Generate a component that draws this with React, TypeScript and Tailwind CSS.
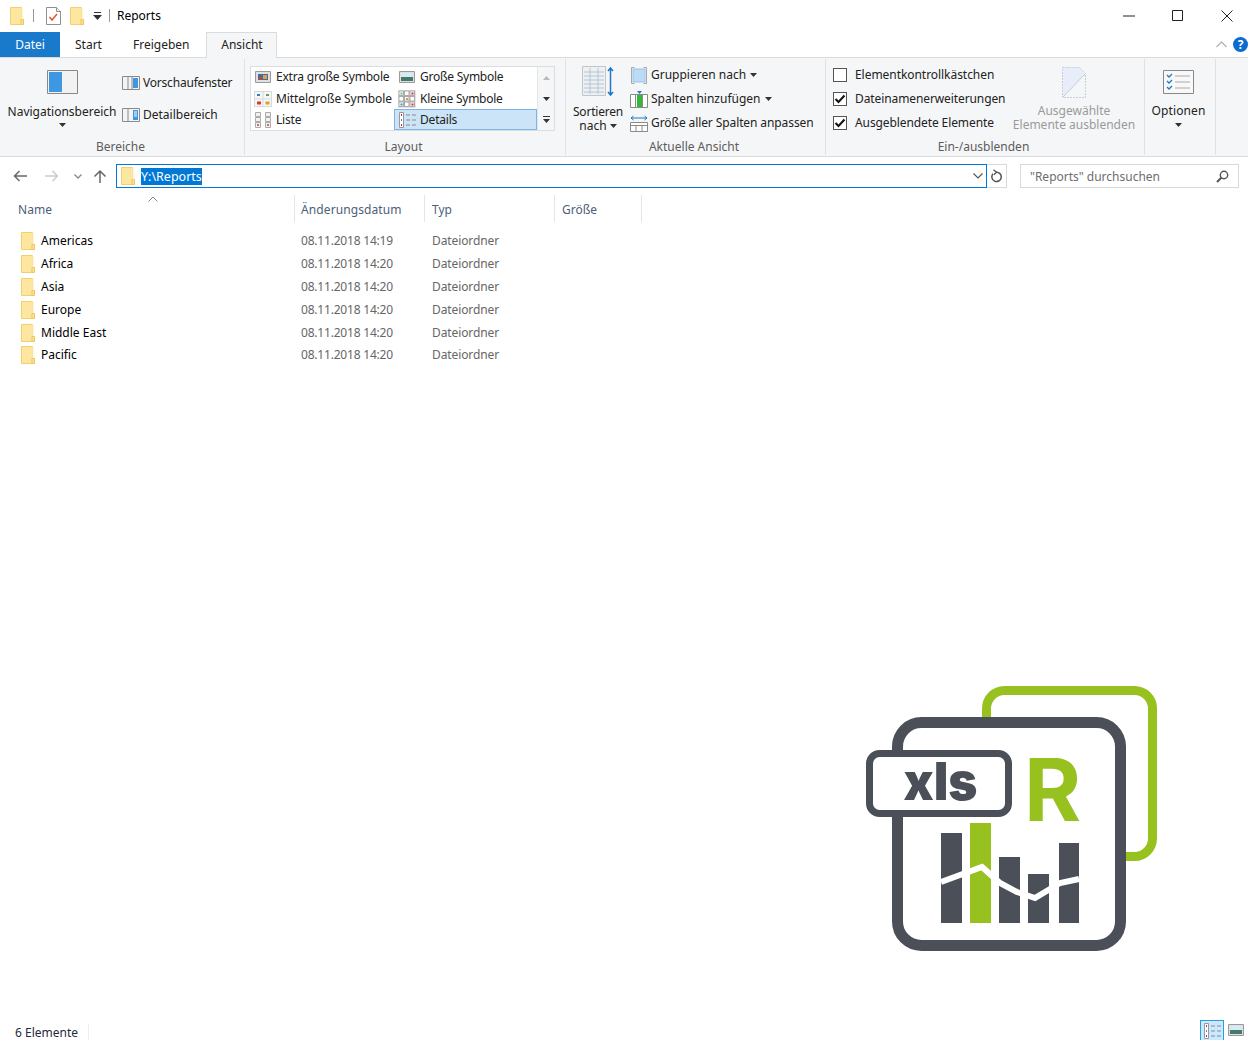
const font = "font-['Noto_Sans','Open_Sans',sans-serif]";

const folders = [
  { name: 'Americas', date: '08.11.2018 14:19' },
  { name: 'Africa', date: '08.11.2018 14:20' },
  { name: 'Asia', date: '08.11.2018 14:20' },
  { name: 'Europe', date: '08.11.2018 14:20' },
  { name: 'Middle East', date: '08.11.2018 14:20' },
  { name: 'Pacific', date: '08.11.2018 14:20' },
];

const Folder = ({ className = '' }: { className?: string }) => (
  <svg width="14" height="18" viewBox="0 0 14 18" className={`shrink-0 ${className}`}>
    <path d="M.5.500h11v17H.5z" fill="#fde69f" stroke="#f2d06e" />
    <path d="M11.500 1h2v11h-2z" fill="#fff6dc" />
    <path d="M11 12.500h2.500v5H11z" fill="#fde39a" stroke="#eec65a" />
  </svg>
);

const Caret = ({ className = '' }: { className?: string }) => (
  <svg width="7" height="4" viewBox="0 0 7 4" className={className}>
    <path d="M0 0h7L3.500 4z" fill="#333" />
  </svg>
);

const Frame = ({ children }: { children?: React.ReactNode }) => (
  <svg width="18" height="14" viewBox="0 0 18 14" className="shrink-0">
    <path d="M.5.500h17v13H.5z" fill="#f4f4f4" stroke="#8a8a8a" />
    {children}
  </svg>
);

const Grid = () => {
  const cells = [];
  for (let r = 0; r < 3; r++)
    for (let c = 0; c < 3; c++)
      cells.push(<rect key={`${r}-${c}`} x={1 + c * 5.500} y={1 + r * 5.500} width="4.500" height="4.500" fill="#fff" stroke="#9a9a9a" strokeWidth=".8" />);
  return (
    <svg width="18" height="18" viewBox="0 0 18 18" className="shrink-0">
      <rect width="18" height="18" fill="#e4e4e4" />
      {cells}
      <rect x="2.500" y="2.500" width="2" height="2" fill="#6b9" />
      <rect x="13.500" y="2.500" width="2" height="2" fill="#d23" />
      <rect x="8" y="8" width="2" height="2" fill="#dc9a2a" />
      <rect x="2.500" y="13.500" width="2" height="2" fill="#39c" />
      <rect x="13.500" y="13.500" width="2" height="2" fill="#d23" />
    </svg>
  );
};

const DetailsIcon = () => (
  <svg width="18" height="16" viewBox="0 0 18 16" className="shrink-0">
    <path d="M1.500.500h4v15h-4z" fill="#fff" stroke="#999" />
    <path d="M8 3h4M14 3h4M8 8h4M14 8h4M8 13h4M14 13h4" stroke="#8a8a8a" strokeWidth="1.200" />
    <rect x="3" y="2" width="1" height="2" fill="#d23" />
    <rect x="3" y="7" width="1" height="2" fill="#39c" />
    <rect x="3" y="12" width="1" height="2" fill="#d23" />
  </svg>
);

const GalleryIcon = ({ kind }: { kind: string }) => {
  if (kind === 'grid') return <Grid />;
  if (kind === 'details') return <DetailsIcon />;
  if (kind === 'list')
    return (
      <svg width="18" height="16" viewBox="0 0 18 16" className="shrink-0">
        <path d="M1.500.5h5v4h-5zM1.500 5.500h5v4h-5zM1.500 10.500h5v5h-5zM11.500.5h5v4h-5zM11.500 5.500h5v4h-5zM11.500 10.500h5v5h-5z" fill="#f2f2f2" stroke="#aaa" />
        <rect x="3" y="12" width="2" height="2" fill="#d66" />
        <rect x="13" y="12" width="2" height="2" fill="#d66" />
      </svg>
    );
  if (kind === 'medium')
    return (
      <svg width="18" height="16" viewBox="0 0 18 16" className="shrink-0">
        <rect width="18" height="16" fill="#d9d9d9" />
        <path d="M1 1h7.500v6.500H1zM9.500 1H17v6.500H9.500zM1 8.500h7.500V15H1zM9.500 8.500H17V15H9.500z" fill="#f7f7f7" />
        <rect x="3" y="3" width="3" height="2" fill="#2f7fc4" />
        <rect x="12" y="3" width="3" height="2" fill="#5fa05a" />
        <rect x="3" y="10.500" width="4" height="3" fill="#d63a25" />
        <rect x="11.500" y="10.500" width="4" height="3" fill="#d9a32c" />
      </svg>
    );
  return (
    <svg width="16" height="12" viewBox="0 0 16 12" className="shrink-0">
      <path d="M.5.500h15v11H.5z" fill="#e0e0e0" stroke="#9a9a9a" />
      {kind === 'extra' ? (
        <>
          <rect x="3" y="3" width="10" height="6" fill="#3f6ea6" />
          <rect x="8" y="4" width="4" height="4" fill="#e2a431" />
          <rect x="4" y="6" width="3" height="3" fill="#c9432d" />
        </>
      ) : (
        <>
          <rect x="2" y="2" width="12" height="4" fill="#d4ecf7" />
          <rect x="2" y="6" width="12" height="4" fill="#47796b" />
        </>
      )}
    </svg>
  );
};

const GalleryItem = ({ icon, label, tracking, selected, raised }: { icon: string; label: string; tracking: string; selected?: boolean; raised?: boolean }) => (
  <div className={`flex h-[21.500px] w-full items-center border pl-[2px] ${raised ? 'pb-[2px]' : ''} ${selected ? 'border-[#7eb4ea] bg-[#cce4f7]' : 'border-transparent'}`}>
    <span className="flex w-[20px] shrink-0 justify-center">
      <GalleryIcon kind={icon} />
    </span>
    <span className={`ml-[3px] whitespace-nowrap ${tracking}`}>{label}</span>
  </div>
);

const Group = ({ width, label, children }: { width: string; label?: string; children?: React.ReactNode }) => (
  <div className={`flex h-full shrink-0 flex-col border-r border-[#e0e1e2] ${width}`}>
    <div className="relative flex-1">{children}</div>
    <div className="h-[17px] pr-[3px] text-center leading-[17px] text-[#5c5c5c]">{label}</div>
  </div>
);

const Check = ({ checked }: { checked?: boolean }) => (
  <span className="flex h-[14px] w-[14px] shrink-0 items-center justify-center border border-[#555] bg-white">
    {checked && (
      <svg width="12" height="10" viewBox="0 0 12 10">
        <path d="M1.500 5l3 3 6-6.500" fill="none" stroke="#111" strokeWidth="2" />
      </svg>
    )}
  </span>
);

const Logo = () => (
  <svg width="320" height="290" viewBox="0 0 320 290" className="absolute left-[850px] top-[675px]">
    <path d="M136.500 45V33.500a18 18 0 0 1 18-18h130a18 18 0 0 1 18 18v130a18 18 0 0 1-18 18H274" fill="none" stroke="#97c11f" strokeWidth="9" />
    <rect x="47.500" y="47.500" width="223" height="223" rx="24" fill="#fff" stroke="#4b4f57" strokeWidth="11" />
    <rect x="19.500" y="78.500" width="139" height="60" rx="10" fill="#fff" stroke="#4b4f57" strokeWidth="7" />
    <text x="90.500" y="125" textAnchor="middle" fontFamily="Inter, sans-serif" fontWeight="900" fontSize="52" textLength="74" lengthAdjust="spacingAndGlyphs" fill="#4b4f57">xls</text>
    <text x="174" y="146" fontFamily="Inter, sans-serif" fontWeight="700" fontSize="87" fill="#97c11f">R</text>
    <rect x="91" y="158" width="21" height="90" fill="#4b4f57" />
    <rect x="120" y="148" width="21" height="100" fill="#97c11f" />
    <rect x="149" y="182" width="21" height="66" fill="#4b4f57" />
    <rect x="178" y="199" width="21" height="49" fill="#4b4f57" />
    <rect x="209" y="168" width="20" height="80" fill="#4b4f57" />
    <path d="M91 207l19-7 22-8 18 16 17 9 18 6 25-15 19-4" fill="none" stroke="#fff" strokeWidth="6" />
  </svg>
);

export default function App() {
  return (
    <div className={`relative flex h-[1040px] w-[1248px] flex-col overflow-hidden bg-white text-[12px] text-[#222] ${font}`}>
      {/* title bar */}
      <div className="flex h-[31px] shrink-0 items-center">
        <Folder className="ml-[10px]" />
        <span className="ml-[9px] h-[13px] w-px bg-[#999]" />
        <svg width="15" height="18" viewBox="0 0 15 18" className="ml-[12px]">
          <path d="M.5.500h10l4 4v13H.5z" fill="#fff" stroke="#8f8f8f" />
          <path d="M10.500.5v4h4" fill="#eee" stroke="#8f8f8f" />
          <path d="M3.500 10l2.500 3 5-6" fill="none" stroke="#e2562d" strokeWidth="1.500" />
        </svg>
        <Folder className="ml-[9px]" />
        <svg width="9" height="8" viewBox="0 0 9 8" className="ml-[9px]">
          <path d="M1 .5h7" stroke="#333" />
          <path d="M0 3h9L4.500 8z" fill="#333" />
        </svg>
        <span className="ml-[7px] h-[13px] w-px bg-[#999]" />
        <span className="ml-[7px] text-black">Reports</span>
        <div className="ml-auto flex items-center">
          <svg width="12" height="2" viewBox="0 0 12 2"><path d="M0 1h12" stroke="#222" /></svg>
          <svg width="12" height="12" viewBox="0 0 12 12" className="ml-[37px]"><path d="M.5.500h10v10H.5z" fill="none" stroke="#222" /></svg>
          <svg width="12" height="12" viewBox="0 0 12 12" className="ml-[37px] mr-[15px]"><path d="M.5.500l11 11M11.500.5l-11 11" stroke="#222" /></svg>
        </div>
      </div>

      {/* tabs */}
      <div className="relative z-10 -mb-px flex h-[27px] shrink-0 items-end">
        <div className="mb-px flex h-[25px] w-[60px] items-center justify-center bg-[#1979ca] text-white">Datei</div>
        <div className="mb-px ml-[15px] flex h-[25px] items-center">Start</div>
        <div className="mb-px ml-[31px] flex h-[25px] items-center">Freigeben</div>
        <div className="ml-[17px] flex h-[26px] w-[71px] items-center justify-center border border-b-0 border-[#dadbdc] bg-[#f5f6f7] pb-px">Ansicht</div>
        <div className="mb-px ml-auto flex h-[25px] items-center">
          <svg width="11" height="7" viewBox="0 0 11 7"><path d="M.5 6l5-5 5 5" fill="none" stroke="#b5b5b5" strokeWidth="1.300" /></svg>
          <span className="ml-[6px] flex h-[15px] w-[15px] items-center justify-center rounded-full bg-[#0a6cce] font-bold text-white">?</span>
        </div>
      </div>

      {/* ribbon */}
      <div className="flex h-[100px] shrink-0 border-y border-[#dadbdc] bg-[#f5f6f7] pb-px pt-px">
        <Group width="w-[245px]" label="Bereiche">
          <div className="flex h-full">
            <div className="ml-[8px] flex w-[108px] flex-col items-center pt-[11px]">
              <svg width="31" height="24" viewBox="0 0 31 24">
                <path d="M.5.500h30v23H.5z" fill="#f2f2f2" stroke="#888" />
                <rect x="2" y="2" width="13" height="20" fill="#3e97e0" />
              </svg>
              <span className="mt-[10px] whitespace-nowrap leading-[16px]">Navigationsbereich</span>
              <Caret className="mt-[3px]" />
            </div>
            <div className="ml-[6px] flex flex-col pt-[13px]">
              <div className="flex h-[22px] items-center gap-[3px]">
                <Frame>
                  <path d="M6 1v12M10 1v12" stroke="#8a8a8a" />
                  <rect x="11" y="2" width="5" height="10" fill="#3e97e0" />
                </Frame>
                <span className="tracking-[-.2px]">Vorschaufenster</span>
              </div>
              <div className="mt-[10px] flex h-[22px] items-center gap-[3px]">
                <Frame>
                  <path d="M6 1v12" stroke="#8a8a8a" />
                  <rect x="11" y="2" width="5" height="10" fill="#3e97e0" />
                  <path d="M12 4h3M12 6h3M12 8h3" stroke="#fff" />
                </Frame>
                <span>Detailbereich</span>
              </div>
            </div>
          </div>
        </Group>

        <Group width="w-[321px]" label="Layout">
          <div className="ml-[5px] mt-[7px] flex h-[65px] w-[305px] border border-[#dcdddf] bg-white">
            <div className="-ml-px flex w-[144px] flex-col">
              <GalleryItem icon="extra" label="Extra große Symbole" tracking="tracking-[-.2px]" raised />
              <GalleryItem icon="medium" label="Mittelgroße Symbole" tracking="tracking-[-.1px]" />
              <GalleryItem icon="list" label="Liste" tracking="tracking-[-.2px]" />
            </div>
            <div className="flex w-[143px] flex-col">
              <GalleryItem icon="large" label="Große Symbole" tracking="tracking-[-.25px]" raised />
              <GalleryItem icon="grid" label="Kleine Symbole" tracking="tracking-[-.25px]" />
              <GalleryItem icon="details" label="Details" tracking="tracking-[-.2px]" selected />
            </div>
            <div className="flex flex-1 flex-col items-center border-l border-[#e5e5e5] bg-[#f5f6f7]">
              <div className="flex h-[21px] items-center"><Caret className="rotate-180 opacity-30" /></div>
              <div className="flex h-[21px] items-center"><Caret /></div>
              <div className="flex h-[21px] flex-col items-center justify-center gap-[2px]">
                <span className="h-px w-[7px] bg-[#333]" />
                <Caret />
              </div>
            </div>
          </div>
        </Group>

        <Group width="w-[260px]" label="Aktuelle Ansicht">
          <div className="flex h-full">
            <div className="ml-[6px] flex w-[52px] flex-col items-center pt-[7px]">
              <svg width="32" height="31" viewBox="0 0 32 31">
                <path d="M.5.500h23v29H.5z" fill="#eef1f3" stroke="#c4c4c4" />
                <path d="M2 6h20M2 10h20M2 14h20M2 18h20M2 22h20M2 26h20M8 2v26M16 2v26" stroke="#b3c4d2" />
                <path d="M28.500 2v27M26 5l2.500-3 2.500 3M26 26l2.500 3 2.500-3" fill="none" stroke="#1f78c8" strokeWidth="1.500" />
              </svg>
              <span className="mt-[8px] leading-[14px] tracking-[-.2px]">Sortieren</span>
              <span className="flex items-center gap-[3px] leading-[14px]">nach <Caret /></span>
            </div>
            <div className="ml-[6px] flex flex-col pt-[4px]">
              <div className="flex h-[24px] items-center gap-[3px]">
                <svg width="18" height="17" viewBox="0 0 18 17" className="shrink-0">
                  <path d="M4.500.5h-3v16h3M13.500.5h3v16h-3" fill="none" stroke="#a8a8a8" />
                  <rect x="3" y="2" width="12" height="13" fill="#bcdcf5" stroke="#9cc4e4" />
                </svg>
                <span>Gruppieren nach</span>
                <Caret className="ml-[1px]" />
              </div>
              <div className="flex h-[24px] items-center gap-[3px]">
                <svg width="18" height="17" viewBox="0 0 18 17" className="shrink-0">
                  <path d="M.5 3.500h17v13H.5z" fill="#fff" stroke="#8a8a8a" />
                  <path d="M5.500 4v12M12.500 4v12" stroke="#8a8a8a" />
                  <rect x="7" y="4" width="5" height="12" fill="#35b73a" />
                  <path d="M7 0h5L9.500 3z" fill="#1f78c8" />
                </svg>
                <span>Spalten hinzufügen</span>
                <Caret className="ml-[1px]" />
              </div>
              <div className="flex h-[24px] items-center gap-[3px]">
                <svg width="18" height="17" viewBox="0 0 18 17" className="shrink-0">
                  <path d="M1 3h16M3.500 1L1 3l2.500 2M14.500 1L17 3l-2.500 2" fill="none" stroke="#1f78c8" />
                  <path d="M.5 7.500h17v9H.5zM.5 10.500h17M6 11v6M12 11v6" fill="#fff" stroke="#8a8a8a" />
                </svg>
                <span className="tracking-[-.1px]">Größe aller Spalten anpassen</span>
              </div>
            </div>
          </div>
        </Group>

        <Group width="w-[319px]" label="Ein-/ausblenden">
          <div className="flex h-full">
            <div className="ml-[7px] flex w-[180px] flex-col pt-[4px]">
              {[
                { label: 'Elementkontrollkästchen', checked: false, tracking: 'tracking-[-.05px]' },
                { label: 'Dateinamenerweiterungen', checked: true, tracking: 'tracking-[-.1px]' },
                { label: 'Ausgeblendete Elemente', checked: true, tracking: 'tracking-[-.1px]' },
              ].map((row) => (
                <div key={row.label} className="flex h-[24px] items-center gap-[8px]">
                  <Check checked={row.checked} />
                  <span className={`whitespace-nowrap ${row.tracking}`}>{row.label}</span>
                </div>
              ))}
            </div>
            <div className="flex w-[122px] flex-col items-center pt-[8px] text-[#9a9a9a]">
              <svg width="24" height="31" viewBox="0 0 24 31">
                <path d="M.5.500h17l6 6v24H.5z" fill="none" stroke="#c4cdd9" strokeDasharray="2 1" />
                <path d="M1 1h16.500L23 7 1 30z" fill="#e7eefa" />
                <path d="M23 7L1 30" stroke="#c4cdd9" />
              </svg>
              <span className="mt-[6px] leading-[14px]">Ausgewählte</span>
              <span className="whitespace-nowrap leading-[14px]">Elemente ausblenden</span>
            </div>
          </div>
        </Group>

        <Group width="w-[71px]">
          <div className="flex flex-col items-center pr-[3px] pt-[11px]">
            <svg width="31" height="24" viewBox="0 0 31 24">
              <path d="M.5.500h30v23H.5z" fill="#f8f8f8" stroke="#888" />
              <path d="M4 5l2 2 3-3M4 11l2 2 3-3M4 17l2 2 3-3" fill="none" stroke="#1f78c8" strokeWidth="1.300" />
              <path d="M12 6h15M12 12h15M12 18h15" stroke="#aaa" />
            </svg>
            <span className="mt-[9px] leading-[16px] tracking-[.1px]">Optionen</span>
            <Caret className="mt-[4px]" />
          </div>
        </Group>
      </div>

      {/* address bar */}
      <div className="flex h-[38px] shrink-0 items-center">
        <svg width="14" height="12" viewBox="0 0 14 12" className="ml-[13px]">
          <path d="M14 6H1.500M6.500 1l-5 5 5 5" fill="none" stroke="#666" strokeWidth="1.500" />
        </svg>
        <svg width="14" height="12" viewBox="0 0 14 12" className="ml-[18px]">
          <path d="M0 6h12.500M7.500 1l5 5-5 5" fill="none" stroke="#ccc" strokeWidth="1.500" />
        </svg>
        <svg width="8" height="5" viewBox="0 0 8 5" className="ml-[15px]">
          <path d="M.5.500L4 4 7.500.5" fill="none" stroke="#888" strokeWidth="1.300" />
        </svg>
        <svg width="14" height="14" viewBox="0 0 14 14" className="ml-[11px]">
          <path d="M7 14V2M1.500 7.500L7 2l5.500 5.500" fill="none" stroke="#666" strokeWidth="1.500" />
        </svg>
        <div className="ml-[9px] flex h-[24px] w-[871px] items-center border border-[#0078d7] bg-white pl-[4px]">
          <Folder />
          <span className="ml-[6px] flex h-[17px] items-center bg-[#0078d7] pt-[2px] text-[12.500px] text-white">Y:\Reports</span>
          <svg width="10" height="6" viewBox="0 0 10 6" className="ml-auto mr-[3px]">
            <path d="M.5.500L5 5 9.500.5" fill="none" stroke="#555" strokeWidth="1.200" />
          </svg>
        </div>
        <div className="flex h-[24px] w-[20px] items-center justify-center border border-l-0 border-[#d9d9d9]">
          <svg width="12" height="14" viewBox="0 0 12 14">
            <path d="M5 3.200a4.700 4.700 0 1 1-3 1.600" fill="none" stroke="#555" strokeWidth="1.500" />
            <path d="M2.500.8L5.500 3.200 3 5.800" fill="none" stroke="#555" strokeWidth="1.300" />
          </svg>
        </div>
        <div className="ml-[13px] flex h-[24px] w-[219px] items-center border border-[#d9d9d9] pl-[9px] pt-px text-[#6d6d6d]">
          "Reports" durchsuchen
          <svg width="13" height="13" viewBox="0 0 13 13" className="ml-auto mr-[9px]">
            <circle cx="8" cy="5" r="3.700" fill="none" stroke="#555" strokeWidth="1.400" />
            <path d="M5.500 7.500L1 12" stroke="#555" strokeWidth="2" />
          </svg>
        </div>
      </div>

      {/* file list */}
      <div className="relative flex h-[27px] shrink-0 items-center text-[#4c607a]">
        <svg width="10" height="6" viewBox="0 0 10 6" className="absolute left-[148px] top-px">
          <path d="M.5 5.500L5 1l4.500 4.500" fill="none" stroke="#888" />
        </svg>
        <div className="flex h-full w-[295px] items-center border-r border-[#e5e5e5] pl-[18px] pt-[2px] tracking-[.1px]">Name</div>
        <div className="flex h-full w-[130px] items-center border-r border-[#e5e5e5] pl-[6px] pt-[2px] tracking-[.1px]">Änderungsdatum</div>
        <div className="flex h-full w-[130px] items-center border-r border-[#e5e5e5] pl-[7px] pt-[2px]">Typ</div>
        <div className="flex h-full w-[87px] items-center border-r border-[#e5e5e5] pl-[7px] pt-[2px]">Größe</div>
      </div>
      <div className="shrink-0 pt-[8px]">
        {folders.map((f) => (
          <div key={f.name} className="flex h-[22.800px] items-center">
            <div className="flex w-[295px] items-center pl-[21px] text-black">
              <Folder />
              <span className="ml-[6px]">{f.name}</span>
            </div>
            <div className="w-[130px] pl-[6px] tracking-[-.2px] text-[#666]">{f.date}</div>
            <div className="pl-[7px] tracking-[-.1px] text-[#666]">Dateiordner</div>
          </div>
        ))}
      </div>

      <Logo />

      {/* status bar */}
      <div className="mt-auto flex h-[20px] shrink-0 items-center">
        <span className="ml-[15px] w-[74px] translate-y-[3px] border-r border-[#eee] text-[#1f2a44]">6 Elemente</span>
        <div className="ml-auto flex items-end self-end">
          <div className="flex h-[20px] w-[24px] items-center justify-center border border-b-0 border-[#26a0da] bg-[#cce8ff]">
            <DetailsIcon />
          </div>
          <div className="ml-[4px] mr-[4px] flex h-[20px] w-[16px] items-center justify-center">
            <GalleryIcon kind="large" />
          </div>
        </div>
      </div>
    </div>
  );
}
